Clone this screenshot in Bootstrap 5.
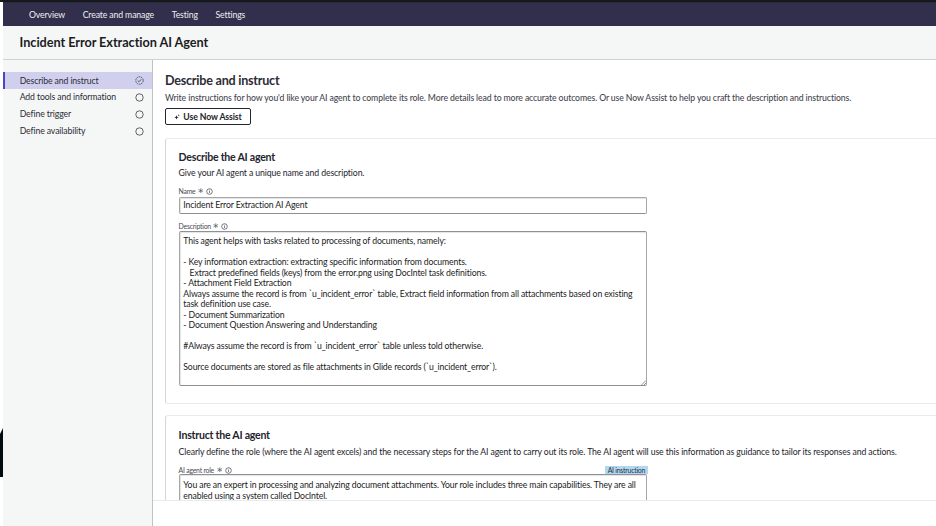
<!DOCTYPE html>
<html lang="en">
<head>
<meta charset="utf-8">
<meta name="viewport" content="width=device-width, initial-scale=1">
<title>Incident Error Extraction AI Agent</title>
<link href="https://cdn.jsdelivr.net/npm/bootstrap@5.3.0/dist/css/bootstrap.min.css" rel="stylesheet">
<style>
html, body { height: 526px; overflow: hidden; }
body { font-family: Lato, "Liberation Sans", sans-serif; font-size: 8.7px; letter-spacing: -.117px; line-height: 12px; color: #24242c; background: #fff; }
h1, h2, h3, p { margin: 0; white-space: nowrap; }
.edge-strip { width: 3px; flex: none; padding-top: 426px; }
.edge-mark { height: 49px; background: #030c10; clip-path: polygon(100% 0, 100% 100%, 0 100%, 0 12%); }
.top-strip { height: 2px; background: #15191c; }
.main-nav { height: 24px; background: #312f4c; border-top: 1px solid #29293f; padding: 1px 0 0 26px; gap: 17.6px; }
.main-nav .nav-link { color: #eeeef4; padding: 0; }
.title-bar { height: 34px; background: #f5f7f7; border-bottom: 1px solid #cfd2d5; padding: 0 0 1px 16.6px; }
.title-bar h1 { font-size: 12.7px; letter-spacing: -.05px; line-height: 16px; font-weight: 700; color: #1b1c22; }
.side { width: 150px; flex: none; background: #f5f7f7; border-right: 1px solid #bfc3c6; padding-top: 12px; }
.step { height: 16.9px; padding: 0 8px 0 16.700px; color: #2c2c35; }
.step.current { background: #d0d0ee; border-left: 2px solid #4a48b8; padding: 1px 8px 0 14.700px; }
.pane { padding: 12px 0 0 12px; height: 441px; overflow: hidden; border-bottom: 1px solid #e8eaeb; }
.pane h2 { font-size: 12.6px; letter-spacing: -.24px; line-height: 17px; font-weight: 700; color: #2c2c35; }
.intro { margin-top: 3px; color: #474751; font-weight: 500; }
.assist { height: 17px; width: 86px; margin-top: 4px; padding: 0; border: 1px solid #24242c; border-radius: 2px; font-size: 8.7px; letter-spacing: -.11px; line-height: 12px; font-weight: 700; color: #24242c; gap: 3px; }
.panel { border: 1px solid #e9ebed; border-right: 0; border-left-color: #d4d7d9; border-radius: 3px 0 0 3px; padding: 11px 0 0 12.600px; }
.panel-a { height: 266px; margin-top: 13px; }
.panel-b { height: 140px; margin-top: 11px; padding-top: 12px; }
.panel h3 { font-size: 10.6px; letter-spacing: -.25px; line-height: 14px; font-weight: 700; color: #24242c; }
.panel h3 + p { margin-top: 3px; letter-spacing: -.109px; }
.panel-b h3 + p { margin-top: 4px; }
.label-row { font-size: 6.9px; letter-spacing: -.24px; line-height: 8px; height: 8px; width: 469px; color: #4b4b55; gap: 2.500px; }
.box { width: 468px; border: 1px solid #8e9095; border-left-color: #a4a6aa; border-right-color: #a4a6aa; border-radius: 2px; padding: 0 3.700px; color: #1b1b22; box-shadow: inset 1px 1px 1px #e3e4e6; position: relative; }
.line-box { height: 17px; line-height: 14px; margin-top: 2px; border-top-color: #a4a6aa; }
.area { line-height: 10.5px; padding-top: 4px; white-space: pre; letter-spacing: -.13px; }
.area-a { height: 155px; margin-top: 1px; }
.area-b { height: 70px; padding-top: 5px; }
.grip { position: absolute; right: 0; bottom: 0; }
.tag { background: #b3d7f0; color: #24343f; padding: 0 2.5px; }
</style>
<script src="https://cdn.jsdelivr.net/npm/bootstrap@5.3.0/dist/js/bootstrap.bundle.min.js"></script>
</head>
<body>
<svg width="0" height="0" class="d-none">
  <symbol id="star" viewBox="0 0 6 6"><path d="M3 .3v5.4M.5 1.6l5 2.8M5.500 1.600l-5 2.800" stroke="#4b4b55" stroke-width=".7" fill="none"/></symbol>
  <symbol id="info" viewBox="0 0 7 7"><circle cx="3.500" cy="3.500" r="2.800" stroke="#4b4b55" stroke-width=".75" fill="none"/><path d="M3.500 3v2M3.500 1.800v.7" stroke="#4b4b55" stroke-width=".7"/></symbol>
  <symbol id="ring" viewBox="0 0 9 9"><circle cx="4.500" cy="4.500" r="3.700" stroke="#3c3c46" stroke-width=".8" fill="none"/></symbol>
</svg>
<div class="top-strip"></div>
<div class="d-flex">
  <div class="edge-strip"><div class="edge-mark"></div></div>
  <div class="flex-grow-1 overflow-hidden">
    <nav class="main-nav d-flex align-items-center">
      <a class="nav-link" href="#">Overview</a>
      <a class="nav-link" href="#">Create and manage</a>
      <a class="nav-link" href="#">Testing</a>
      <a class="nav-link" href="#">Settings</a>
    </nav>
    <header class="title-bar d-flex align-items-center"><h1>Incident Error Extraction AI Agent</h1></header>
    <div class="d-flex">
      <aside class="side">
        <div class="step current d-flex align-items-center justify-content-between"><span>Describe and instruct</span>
          <svg width="9" height="9" viewBox="0 0 9 9" fill="none" stroke="#3c3c46" stroke-width=".8"><circle cx="4.500" cy="4.500" r="3.700" stroke-dasharray="1.700 .62"/><path d="M2.700 4.600l1.300 1.200 2.300-2.500"/></svg></div>
        <div class="step d-flex align-items-center justify-content-between"><span>Add tools and information</span><svg width="9" height="9"><use href="#ring"/></svg></div>
        <div class="step d-flex align-items-center justify-content-between"><span>Define trigger</span><svg width="9" height="9"><use href="#ring"/></svg></div>
        <div class="step d-flex align-items-center justify-content-between"><span>Define availability</span><svg width="9" height="9"><use href="#ring"/></svg></div>
      </aside>
      <div class="flex-grow-1 overflow-hidden" style="height:466px">
        <main class="pane">
          <h2>Describe and instruct</h2>
          <p class="intro"><span>Write instructions for how you'd like your AI agent to complete its role. More details lead to more accurate outcomes. Or use Now Assist to help you craft the description and instructions.</span></p>
          <button class="assist btn d-flex align-items-center justify-content-center" type="button">
            <svg width="6" height="6" viewBox="0 0 6 6" fill="#24242c"><path d="M2.500 1.200l.6 1.500 1.500.6-1.500.6-.6 1.600-.6-1.600L.4 3.300l1.500-.6zM4.800.1l.3.800.8.3-.8.3-.3.800-.3-.8-.8-.3.800-.3z"/></svg>Use Now Assist</button>
          <section class="panel panel-a">
            <h3>Describe the AI agent</h3>
            <p>Give your AI agent a unique name and description.</p>
            <div class="label-row d-flex align-items-center mt-2"><span>Name</span><svg width="5.500" height="5.500"><use href="#star"/></svg><svg width="7" height="7"><use href="#info"/></svg></div>
            <div class="box line-box">Incident Error Extraction AI Agent</div>
            <div class="label-row d-flex align-items-center mt-2"><span>Description</span><svg width="5.500" height="5.500"><use href="#star"/></svg><svg width="7" height="7"><use href="#info"/></svg></div>
            <div class="box area area-a">This agent helps with tasks related to processing of documents, namely:

- Key information extraction: extracting specific information from documents.
   Extract predefined fields (keys) from the error.png using DocIntel task definitions.
- Attachment Field Extraction
Always assume the record is from `u_incident_error` table, Extract field information from all attachments based on existing
task definition use case.
- Document Summarization
- Document Question Answering and Understanding

#Always assume the record is from `u_incident_error` table unless told otherwise.

Source documents are stored as file attachments in Glide records (`u_incident_error`).<svg class="grip" width="5" height="5" viewBox="0 0 5 5" stroke="#66686c" stroke-width=".7"><path d="M.5 5L5 .5M3 5l2-2"/></svg></div>
          </section>
          <section class="panel panel-b">
            <h3>Instruct the AI agent</h3>
            <p>Clearly define the role (where the AI agent excels) and the necessary steps for the AI agent to carry out its role. The AI agent will use this information as guidance to tailor its responses and actions.</p>
            <div class="label-row d-flex align-items-center mt-2"><span>AI agent role</span><svg width="5.500" height="5.500"><use href="#star"/></svg><svg width="7" height="7"><use href="#info"/></svg><span class="tag ms-auto">AI instruction</span></div>
            <div class="box area area-b">You are an expert in processing and analyzing document attachments. Your role includes three main capabilities. They are all
enabled using a system called DocIntel.</div>
          </section>
        </main>
      </div>
    </div>
  </div>
</div>
</body>
</html>
